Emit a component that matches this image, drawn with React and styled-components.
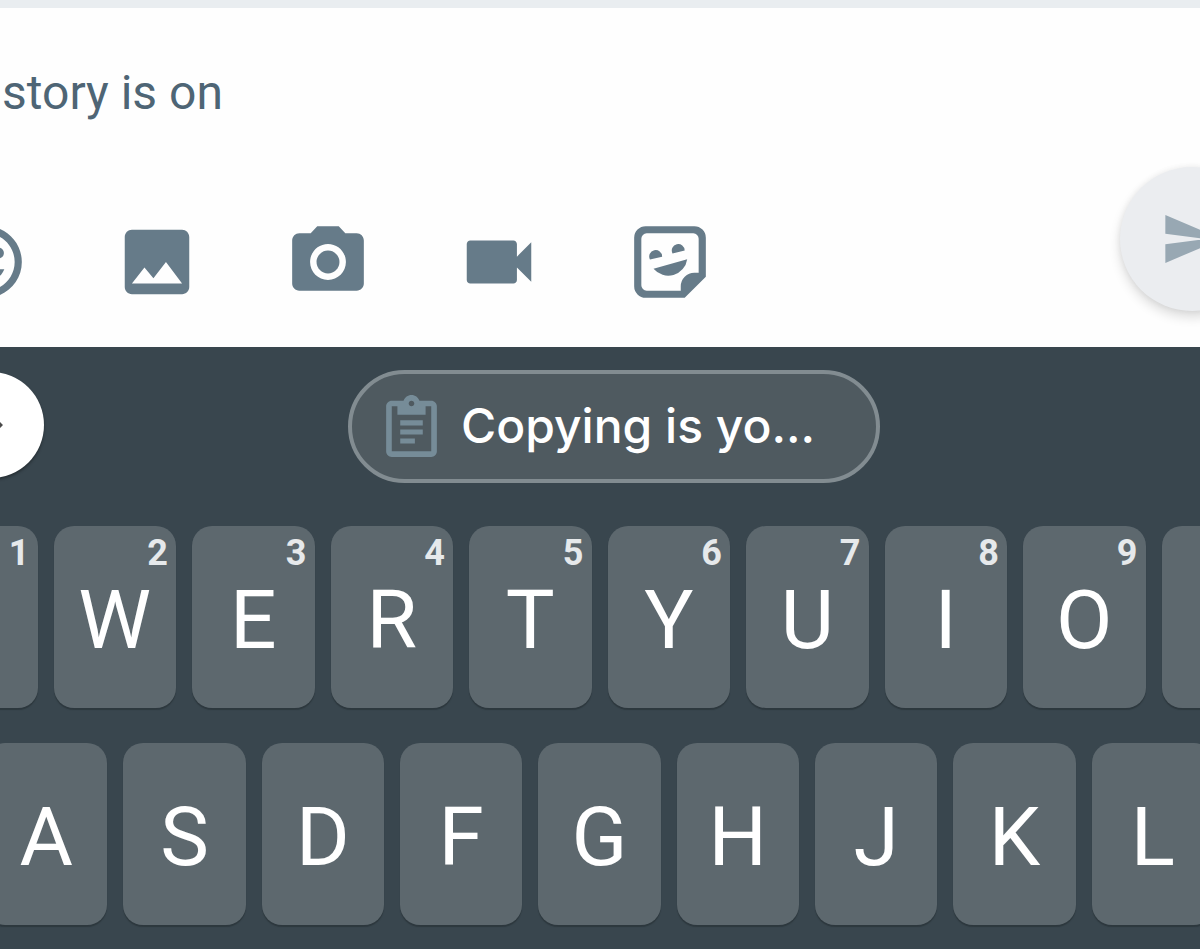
import React, { useState } from "react";
import styled, { createGlobalStyle } from "styled-components";
import {
  MdCameraAlt,
  MdChevronRight,
  MdImage,
  MdMood,
  MdSend,
  MdVideocam,
} from "react-icons/md";

const TOP_ROW = [
  ["Q", "1"],
  ["W", "2"],
  ["E", "3"],
  ["R", "4"],
  ["T", "5"],
  ["Y", "6"],
  ["U", "7"],
  ["I", "8"],
  ["O", "9"],
  ["P", "0"],
];

const HOME_ROW = ["A", "S", "D", "F", "G", "H", "J", "K", "L"];

function StickerIcon() {
  return (
    <svg viewBox="0 0 24 24" aria-hidden="true">
      <path
        fill="currentColor"
        fillRule="evenodd"
        d="M5.2 2h13.6A3.2 3.2 0 0 1 22 5.2v10.9L16.1 22H5.2A3.2 3.2 0 0 1 2 18.8V5.2A3.2 3.2 0 0 1 5.2 2zM5.5 4A1.5 1.5 0 0 0 4 5.5v13A1.5 1.5 0 0 0 5.5 20H15v-1.2A3.8 3.8 0 0 1 18.8 15H20V5.5A1.5 1.5 0 0 0 18.5 4z"
      />
      <path
        fill="currentColor"
        d="M6.4 11.3A1.8 1.8 0 1 1 9.8 10.5zM12.7 9.6A1.8 1.8 0 1 1 16.1 8.8zM7.4 13.9L16.8 11.2A5.35 5.35 0 0 1 7.4 13.9z"
      />
    </svg>
  );
}

function ClipboardIcon() {
  return (
    <svg viewBox="3 0 18 22" width="51" height="62" aria-hidden="true">
      <path
        fill="currentColor"
        d="M19 2h-4.18C14.4.84 13.3 0 12 0c-1.3 0-2.4.84-2.82 2H5c-1.1 0-2 .9-2 2v16c0 1.1.9 2 2 2h14c1.1 0 2-.9 2-2V4c0-1.1-.9-2-2-2zm-7 0c.55 0 1 .45 1 1s-.45 1-1 1-1-.45-1-1 .45-1 1-1zm7 18H5V4h2v3h10V4h2v16z"
      />
      <path
        fill="currentColor"
        d="M8 9h8v1.8H8zM8 12.2h8V14H8zM8 15.4h5.2v1.8H8z"
      />
    </svg>
  );
}

const TOOLS = [
  ["Emoji", MdMood],
  ["Photo", MdImage],
  ["Camera", MdCameraAlt],
  ["Video", MdVideocam],
  ["Sticker", StickerIcon],
];

function App() {
  const [text, setText] = useState("story is on");

  return (
    <Screen>
      <GlobalStyle />
      <Composer>
        <MessageInput
          aria-label="Message"
          value={text}
          onChange={(e) => setText(e.target.value)}
        />
        <Actions>
          <Tools>
            {TOOLS.map(([label, Icon]) => (
              <ToolButton key={label} type="button" aria-label={label}>
                <Icon />
              </ToolButton>
            ))}
          </Tools>
          <SendButton type="button" aria-label="Send">
            <MdSend size={64} />
          </SendButton>
        </Actions>
      </Composer>
      <Keyboard>
        <SuggestionBar>
          <ExpandButton type="button" aria-label="More">
            <MdChevronRight size={72} />
          </ExpandButton>
          <ClipChip type="button">
            <ClipboardIcon />
            <span>Copying is yo...</span>
          </ClipChip>
        </SuggestionBar>
        <TopRow>
          {TOP_ROW.map(([letter, digit]) => (
            <Key key={letter} type="button">
              {letter}
              <Hint>{digit}</Hint>
            </Key>
          ))}
        </TopRow>
        <HomeRow>
          {HOME_ROW.map((letter) => (
            <Key key={letter} type="button">
              {letter}
            </Key>
          ))}
        </HomeRow>
      </Keyboard>
    </Screen>
  );
}

export default App;

const GlobalStyle = createGlobalStyle`
  * {
    box-sizing: border-box;
  }

  body {
    margin: 0;
    background: #39464e;
  }

  button {
    margin: 0;
    padding: 0;
    border: 0;
    background: none;
    font-family: Roboto, sans-serif;
    cursor: pointer;
  }
`;

const Screen = styled.div`
  min-height: 100vh;
  display: flex;
  flex-direction: column;
  overflow: hidden;
  font-family: Roboto, sans-serif;
`;

const Composer = styled.section`
  padding: 54px 0 36px;
  border-top: 8px solid #e9edf0;
  background: #fefefe;
`;

const MessageInput = styled.input`
  display: block;
  width: 100%;
  height: 60px;
  padding: 0 2px;
  border: 0;
  outline: 0;
  background: none;
  color: #4e6575;
  font: 400 48px Roboto, sans-serif;
`;

const Actions = styled.div`
  display: flex;
  justify-content: space-between;
  align-items: flex-end;
  margin-top: 45px;
`;

const Tools = styled.div`
  display: flex;
  gap: 85px;
  margin-left: -57px;
  padding-bottom: 6px;
`;

const ToolButton = styled.button`
  width: 86px;
  height: 86px;
  color: #667b89;

  svg {
    display: block;
    width: 100%;
    height: 100%;
  }
`;

const SendButton = styled.button`
  display: flex;
  flex: none;
  align-items: center;
  justify-content: center;
  width: 144px;
  height: 144px;
  margin-right: -64px;
  border-radius: 50%;
  background: #ebedf0;
  color: #98a8b3;
  box-shadow: 0 6px 12px rgba(0, 0, 0, 0.14), 0 0 6px rgba(0, 0, 0, 0.06);
`;

const Keyboard = styled.section`
  flex: 1;
  padding: 23px 0 24px;
  background: #39464e;
`;

const SuggestionBar = styled.div`
  display: grid;
  grid-template-columns: 1fr auto 1fr;
  align-items: center;
  padding-left: 28px;
  margin-bottom: 43px;
`;

const ExpandButton = styled.button`
  display: flex;
  align-items: center;
  justify-content: center;
  width: 106px;
  height: 106px;
  margin: 0 0 4px -90px;
  border-radius: 50%;
  background: #fff;
  color: #4a4a4a;
  box-shadow: 0 2px 3px rgba(0, 0, 0, 0.35);
`;

const ClipChip = styled.button`
  display: flex;
  align-items: center;
  gap: 24px;
  width: 532px;
  height: 113px;
  padding: 0 34px 2px;
  border: 4px solid #828c91;
  border-radius: 57px;
  background: #4f5a60;
  color: #768c98;

  span {
    color: #fff;
    font: 500 48px Inter, sans-serif;
    white-space: nowrap;
  }
`;

const KeyRow = styled.div`
  display: flex;
  gap: 16px;
`;

const TopRow = styled(KeyRow)`
  margin: 0 -84px 35px -85px;
`;

const HomeRow = styled(KeyRow)`
  margin: 0 -14px 0 -15px;
`;

const Key = styled.button`
  position: relative;
  flex: 1 1 0;
  height: 182px;
  padding-top: 6px;
  border-radius: 20px;
  background: #5d686e;
  color: #fff;
  font-size: 82px;
  line-height: 96px;
  box-shadow: 0 2px 1px #2d383e;
`;

const Hint = styled.span`
  position: absolute;
  top: 6px;
  right: 8px;
  color: #e6e9eb;
  font-size: 36px;
  font-weight: 700;
  line-height: 42px;
`;
